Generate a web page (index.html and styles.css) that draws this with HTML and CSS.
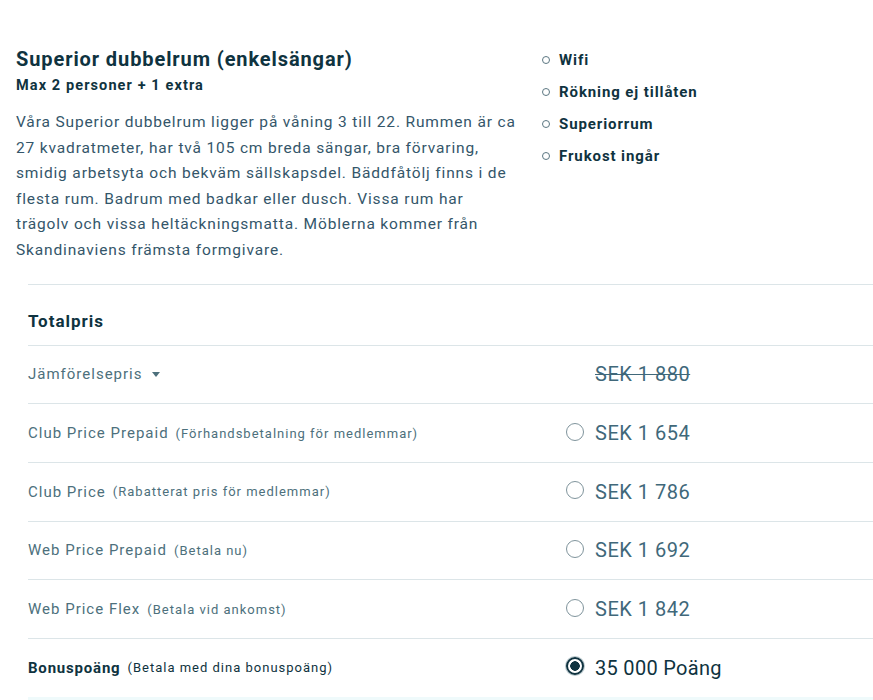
FILE: index.html
```html
<!DOCTYPE html>
<html lang="sv">
<head>
<meta charset="utf-8">
<title>Superior dubbelrum</title>
<link rel="stylesheet" href="styles.css">
</head>
<body>
<section class="room">
  <div class="room-info">
    <div class="room-main">
      <h1 class="room-title">Superior dubbelrum (enkelsängar)</h1>
      <p class="room-capacity">Max 2 personer + 1 extra</p>
      <p class="room-desc">Våra Superior dubbelrum ligger på våning 3 till 22. Rummen är ca 27 kvadratmeter, har två 105 cm breda sängar, bra förvaring, smidig arbetsyta och bekväm sällskapsdel. Bäddfåtölj finns i de flesta rum. Badrum med badkar eller dusch. Vissa rum har trägolv och vissa heltäckningsmatta. Möblerna kommer från Skandinaviens främsta formgivare.</p>
    </div>
    <ul class="amenities">
      <li>Wifi</li>
      <li>Rökning ej tillåten</li>
      <li>Superiorrum</li>
      <li>Frukost ingår</li>
    </ul>
  </div>

  <div class="prices">
    <div class="price-row price-head">
      <span class="total">Totalpris</span>
    </div>
    <div class="price-row">
      <span class="label">Jämförelsepris <span class="caret"></span></span>
      <span class="price-cell no-radio"><span class="amount struck">SEK 1 880</span></span>
    </div>
    <div class="price-row">
      <span class="label">Club Price Prepaid <small>(Förhandsbetalning för medlemmar)</small></span>
      <span class="price-cell"><span class="radio"></span><span class="amount">SEK 1 654</span></span>
    </div>
    <div class="price-row">
      <span class="label">Club Price <small>(Rabatterat pris för medlemmar)</small></span>
      <span class="price-cell"><span class="radio"></span><span class="amount">SEK 1 786</span></span>
    </div>
    <div class="price-row">
      <span class="label">Web Price Prepaid <small>(Betala nu)</small></span>
      <span class="price-cell"><span class="radio"></span><span class="amount">SEK 1 692</span></span>
    </div>
    <div class="price-row">
      <span class="label">Web Price Flex <small>(Betala vid ankomst)</small></span>
      <span class="price-cell"><span class="radio"></span><span class="amount">SEK 1 842</span></span>
    </div>
    <div class="price-row selected">
      <span class="label strong">Bonuspoäng <small>(Betala med dina bonuspoäng)</small></span>
      <span class="price-cell"><span class="radio checked"></span><span class="amount">35 000 Poäng</span></span>
    </div>
    <div class="price-extra"></div>
  </div>
</section>
</body>
</html>
```

FILE: styles.css
```css
* { box-sizing: border-box; }

html, body {
  margin: 0;
  padding: 0;
  background: #ffffff;
}

body {
  font-family: Roboto, "Liberation Sans", sans-serif;
  color: #34566a;
  overflow: hidden;
}

.room {
  padding-top: 46px;
}

.room-info {
  display: flex;
  padding-left: 16px;
}

.room-main {
  width: 500px;
  flex: none;
}

.room-title {
  margin: 0;
  font-size: 20px;
  line-height: 26px;
  font-weight: 700;
  letter-spacing: 0.9px;
  color: #0f3340;
}

.room-capacity {
  margin: 4px 0 0;
  font-size: 14.5px;
  line-height: 20px;
  font-weight: 700;
  letter-spacing: 1.1px;
  color: #0f3340;
}

.room-desc {
  margin: 14px 0 0;
  font-size: 15.5px;
  line-height: 25.6px;
  letter-spacing: 0.85px;
  color: #34566a;
}

.amenities {
  list-style: none;
  margin: -2px 0 0 26px;
  padding: 0;
}

.amenities li {
  display: flex;
  align-items: center;
  gap: 9px;
  font-size: 15px;
  line-height: 32px;
  font-weight: 700;
  letter-spacing: 0.9px;
  color: #0f3340;
}

.amenities li::before {
  content: "";
  width: 6px;
  height: 6px;
  border: 1px solid #5c7782;
  border-radius: 50%;
}

.prices {
  margin: 20px 0 0 28px;
}

.price-row {
  display: grid;
  grid-template-columns: 538px 1fr;
  align-items: center;
  height: 58.7px;
  border-top: 1px solid #dce5e8;
}

.price-head {
  height: 61px;
  align-items: end;
  padding-bottom: 14px;
}

.total {
  font-size: 17px;
  font-weight: 700;
  letter-spacing: 1px;
  color: #0f3340;
}

.label {
  font-size: 15px;
  letter-spacing: 1px;
  color: #4d707c;
  display: flex;
  align-items: center;
}

.label small {
  font-size: 13px;
  letter-spacing: 1px;
  margin-left: 7px;
  color: #4d707c;
}

.label.strong {
  font-weight: 700;
  letter-spacing: 0.8px;
  color: #0f3340;
}

.label.strong small {
  font-weight: 400;
  color: #0f3340;
}

.caret {
  width: 0;
  height: 0;
  margin-left: 9px;
  border-left: 4px solid transparent;
  border-right: 4px solid transparent;
  border-top: 5px solid #4d707c;
}

.price-cell {
  display: flex;
  align-items: center;
  gap: 11px;
}

.price-cell.no-radio {
  padding-left: 29px;
}

.radio {
  width: 18px;
  height: 18px;
  border: 1.2px solid #7f949c;
  border-radius: 50%;
  flex: none;
  margin-top: -3px;
}

.radio.checked {
  border: 2px solid #0f3340;
  box-shadow: 0 0 0 1px #b9c8cd;
  background: radial-gradient(circle, #0f3340 0 4.5px, #ffffff 5px);
}

.amount {
  font-size: 20px;
  letter-spacing: 0.5px;
  color: #40687a;
}

.amount.struck {
  text-decoration: line-through;
  text-decoration-thickness: 1px;
}

.selected .amount {
  color: #0f3340;
  letter-spacing: 0.3px;
}

.price-extra {
  height: 10px;
  background: #effafb;
}
```
